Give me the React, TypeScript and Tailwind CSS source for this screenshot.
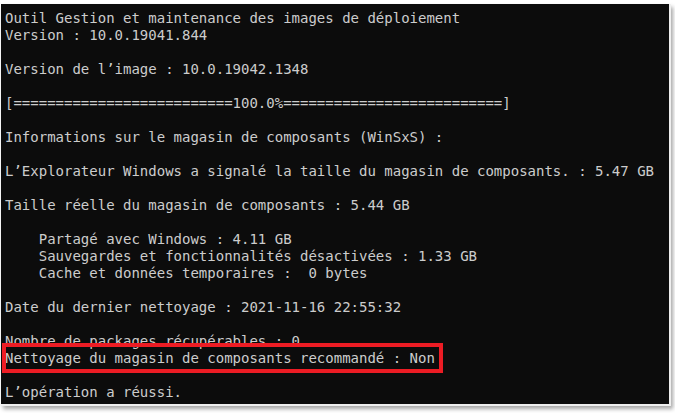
import React from 'react'

const lines = [
	'Outil Gestion et maintenance des images de déploiement',
	'Version : 10.0.19041.844',
	'',
	'Version de l’image : 10.0.19042.1348',
	'',
	'[==========================100.0%==========================]',
	'',
	'Informations sur le magasin de composants (WinSxS) :',
	'',
	'L’Explorateur Windows a signalé la taille du magasin de composants. : 5.47 GB',
	'',
	'Taille réelle du magasin de composants : 5.44 GB',
	'',
	'    Partagé avec Windows : 4.11 GB',
	'    Sauvegardes et fonctionnalités désactivées : 1.33 GB',
	'    Cache et données temporaires :  0 bytes',
	'',
	'Date du dernier nettoyage : 2021-11-16 22:55:32',
	'',
	'Nombre de packages récupérables : 0',
	'Nettoyage du magasin de composants recommandé : Non',
	'',
	'L’opération a réussi.',
]

export default function App() {
	return (
		<div className="w-[675px] h-[413px] bg-white overflow-hidden">
			<div className="relative ml-[1px] mt-[4px] w-[670px] h-[402px] bg-[#0c0c0c] border-r-2 border-b-2 border-[#eeeeee] shadow-[2px_3px_4px_rgba(0,0,0,0.35)]">
				<div
					className="pl-[4px] pt-[6px] text-[14px] leading-[17px] text-[#cccccc] whitespace-pre"
					style={{ fontFamily: '"DejaVu Sans Mono", "Liberation Mono", monospace' }}
				>
					{lines.map((line, i) => (
						<div key={i} className="h-[17px]">
							{line}
						</div>
					))}
				</div>
				{/* annotation */}
				<div className="absolute left-[1px] top-[339px] w-[441px] h-[30px] border-4 border-[#ed1c24]" />
			</div>
		</div>
	)
}
